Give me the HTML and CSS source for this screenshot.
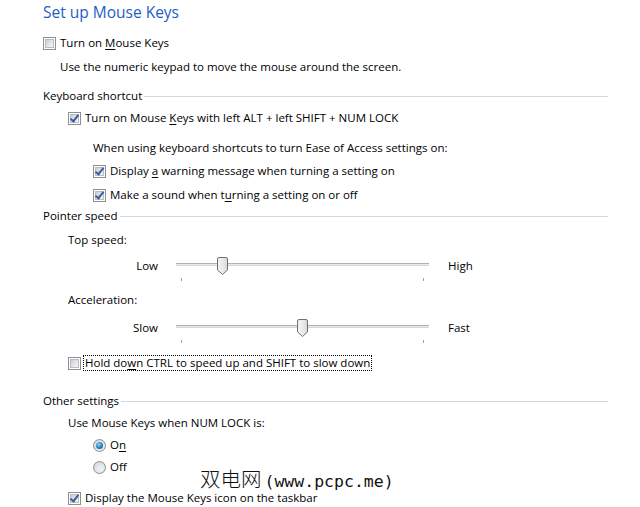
FILE: index.html
```html
<!DOCTYPE html>
<html>
<head>
<meta charset="utf-8">
<link rel="stylesheet" href="styles.css">
</head>
<body>
<div class="page">
  <h1 class="title">Set up Mouse Keys</h1>

  <div class="row m11">
    <span class="cb"></span><span class="lbl">Turn on <u>M</u>ouse Keys</span>
  </div>
  <div class="row m8 text-in">Use the numeric keypad to move the mouse around the screen.</div>

  <div class="row m13 group"><span class="gtitle">Keyboard shortcut</span><span class="gline"></span></div>
  <div class="row m6 ind1"><span class="cb checked"></span><span class="lbl">Turn on Mouse <u>K</u>eys with left ALT + left SHIFT + NUM LOCK</span></div>
  <div class="row m14 ind2">When using keyboard shortcuts to turn Ease of Access settings on:</div>
  <div class="row m7 ind2"><span class="cb checked"></span><span class="lbl">Display <u>a</u> warning message when turning a setting on</span></div>
  <div class="row m8 ind2"><span class="cb checked"></span><span class="lbl">Make a sound when t<u>u</u>rning a setting on or off</span></div>

  <div class="row m5 group"><span class="gtitle">Pointer speed</span><span class="gline"></span></div>
  <div class="row m8 ind1">Top speed:</div>
  <div class="slider m10">
    <span class="slabel">Low</span>
    <div class="track-wrap">
      <div class="track"></div>
      <span class="thumb" style="left:41px"></span>
      <div class="ticks"><span></span><span></span></div>
    </div>
    <span class="rlabel">High</span>
  </div>
  <div class="row m18 ind1">Acceleration:</div>
  <div class="slider m12">
    <span class="slabel">Slow</span>
    <div class="track-wrap">
      <div class="track"></div>
      <span class="thumb" style="left:121px"></span>
      <div class="ticks"><span></span><span></span></div>
    </div>
    <span class="rlabel">Fast</span>
  </div>
  <div class="row m19 ind1"><span class="cb"></span><span class="lbl focus">Hold do<u>w</u>n CTRL to speed up and SHIFT to slow down</span></div>

  <div class="row m22 group"><span class="gtitle">Other settings</span><span class="gline"></span></div>
  <div class="row m6 ind1">Use Mouse Keys when NUM LOCK is:</div>
  <div class="row m6 ind2"><span class="rb checked"></span><span class="lbl">O<u>n</u></span></div>
  <div class="row m6 ind2"><span class="rb"></span><span class="lbl">Off</span></div>
  <div class="row m15 ind1"><span class="cb checked"></span><span class="lbl">Display the Mouse Keys icon on the taskbar</span></div>

  <div class="watermark"><span class="wm-cjk">双电网</span><span class="wm-lat">(www.pcpc.me)</span></div>
</div>
</body>
</html>
```

FILE: styles.css
```css
html, body {
  margin: 0;
  padding: 0;
  background: #ffffff;
}
body {
  font-family: "Open Sans", "Noto Sans", sans-serif;
  font-size: 11.5px;
  color: #000000;
  overflow: hidden;
}
.page {
  position: relative;
  width: 640px;
  height: 507px;
  padding-left: 43px;
  box-sizing: border-box;
}
.title {
  margin: 0;
  height: 24px;
  line-height: 24px;
  font-size: 15.5px;
  font-weight: normal;
  color: #1d5ec5;
}
.row {
  display: flex;
  align-items: center;
  height: 16px;
  line-height: 16px;
  white-space: nowrap;
}
.m5 { margin-top: 5px; }
.m6 { margin-top: 6px; }
.m7 { margin-top: 7px; }
.m8 { margin-top: 8px; }
.m10 { margin-top: 10px; }
.m11 { margin-top: 11px; }
.m12 { margin-top: 12px; }
.m13 { margin-top: 13px; }
.m14 { margin-top: 14px; }
.m15 { margin-top: 15px; }
.m18 { margin-top: 18px; }
.m19 { margin-top: 19px; }
.m22 { margin-top: 22px; }
.text-in { padding-left: 17px; }
.ind1 { padding-left: 25px; }
.ind2 { padding-left: 50px; }
.group {
  width: 565px;
}
.gtitle { flex: none; }
.gline {
  flex: 1;
  height: 1px;
  background: #d3d7dc;
  margin-left: 2px;
  margin-top: 1px;
}
.lbl { margin-left: 4px; }
u { text-decoration-thickness: 1px; text-underline-offset: 2px; }
.focus {
  outline: 1px dotted #000;
  outline-offset: 0;
  line-height: 14px;
  margin-left: 3px;
  padding: 0 1px;
}
.cb {
  flex: none;
  width: 13px;
  height: 13px;
  box-sizing: border-box;
  border: 1px solid #8e8f8f;
  background: #ffffff;
  position: relative;
}
.cb::before {
  content: "";
  position: absolute;
  left: 1px; top: 1px; right: 1px; bottom: 1px;
  border: 1px solid #b8bcc2;
  background: linear-gradient(135deg, #cbced2 0%, #e6e8ea 60%, #f6f6f6 100%);
}
.cb.checked::after {
  content: "";
  position: absolute;
  left: 3px;
  top: 0px;
  width: 3px;
  height: 7px;
  border-right: 2px solid #3c5a9e;
  border-bottom: 2px solid #3c5a9e;
  transform: rotate(38deg);
  transform-origin: center;
}
.rb {
  flex: none;
  width: 13px;
  height: 13px;
  box-sizing: border-box;
  border-radius: 50%;
  border: 1px solid #8e8f8f;
  background: radial-gradient(circle at 60% 65%, #f4f4f4 0%, #d9dbdd 70%, #cacccf 100%);
  position: relative;
}
.rb.checked::after {
  content: "";
  position: absolute;
  left: 2px; top: 2px;
  width: 7px; height: 7px;
  border-radius: 50%;
  background: radial-gradient(circle at 40% 35%, #8fd3f7 0%, #2b7dbf 55%, #15426f 100%);
}
.slider {
  display: flex;
  align-items: flex-start;
  height: 16px;
  padding-left: 25px;
  white-space: nowrap;
}
.slabel {
  width: 90px;
  text-align: right;
  line-height: 16px;
  flex: none;
}
.rlabel {
  margin-left: 19px;
  line-height: 16px;
}
.track-wrap {
  position: relative;
  width: 253px;
  height: 16px;
  margin-left: 18px;
  flex: none;
}
.track {
  position: absolute;
  left: 0; right: 0;
  top: 5px;
  height: 3px;
  box-sizing: border-box;
  border-top: 1px solid #b0b0b0;
  background: #e7eaea;
  border-bottom: 1px solid #d6d6d6;
}
.ticks {
  position: absolute;
  left: 5px; right: 5px;
  top: 20px;
  height: 3px;
  display: flex;
  justify-content: space-between;
}
.ticks span {
  width: 1px;
  height: 3px;
  background: #a0a0a0;
}
.thumb {
  position: absolute;
  top: -1px;
  width: 11px;
  height: 18px;
  background: no-repeat center/11px 18px url("data:image/svg+xml;utf8,<svg xmlns='http://www.w3.org/2000/svg' width='11' height='18' viewBox='0 0 11 18'><defs><linearGradient id='g' x1='0' y1='0' x2='1' y2='0'><stop offset='0' stop-color='%23f2f2f2'/><stop offset='0.5' stop-color='%23ebebeb'/><stop offset='1' stop-color='%23d8d8d8'/></linearGradient></defs><path d='M2 0.5 H9 Q10.5 0.5 10.5 2 V13 L5.5 17.5 L0.5 13 V2 Q0.5 0.5 2 0.5 Z' fill='url(%23g)' stroke='%23707070' stroke-width='1'/></svg>");
}
.watermark {
  position: absolute;
  left: 200px;
  top: 469px;
  height: 19px;
  line-height: 19px;
  color: #111;
  white-space: nowrap;
}
.wm-cjk {
  font-family: "Noto Sans CJK SC", sans-serif;
  font-size: 20.5px;
  line-height: 19px;
  font-weight: 300;
}
.wm-lat {
  font-family: "DejaVu Sans Mono", "Liberation Mono", monospace;
  font-size: 16.5px;
  line-height: 19px;
  margin-left: 3px;
}
```
